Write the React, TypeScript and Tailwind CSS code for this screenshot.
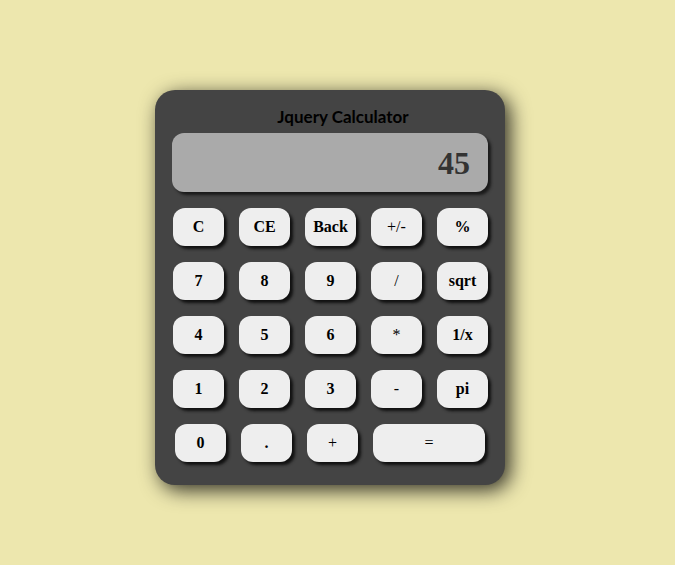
import React from 'react';

type Key = { label: string; bold?: boolean; wide?: boolean };

const rows: Key[][] = [
  [{ label: 'C', bold: true }, { label: 'CE', bold: true }, { label: 'Back', bold: true }, { label: '+/-' }, { label: '%', bold: true }],
  [{ label: '7', bold: true }, { label: '8', bold: true }, { label: '9', bold: true }, { label: '/' }, { label: 'sqrt', bold: true }],
  [{ label: '4', bold: true }, { label: '5', bold: true }, { label: '6', bold: true }, { label: '*' }, { label: '1/x', bold: true }],
  [{ label: '1', bold: true }, { label: '2', bold: true }, { label: '3', bold: true }, { label: '-' }, { label: 'pi', bold: true }],
];

const lastRow: Key[] = [
  { label: '0', bold: true },
  { label: '.', bold: true },
  { label: '+' },
  { label: '=', wide: true },
];

const KeyButton: React.FC<{ k: Key }> = ({ k }) => (
  <button
    className={`h-[38px] ${k.wide ? 'w-[112px]' : 'w-[51px]'} rounded-[12px] bg-[#eeeeee] text-black text-[16px] ${
      k.bold ? 'font-bold' : 'font-normal'
    } shadow-[3px_3px_3px_#111] font-['Liberation_Serif',serif]`}
  >
    {k.label}
  </button>
);

const App: React.FC = () => {
  return (
    <div className="min-h-[565px] w-full bg-[#ede7ae] pt-[90px] pl-[155px]">
      <div className="w-[350px] h-[395px] rounded-[20px] bg-[#444444] shadow-[5px_5px_20px_rgba(0,0,0,0.8)] px-[17px] pt-[16px]">
        <h1 className="pl-[26px] text-center text-[17px] leading-[22px] font-bold text-black font-['Lato',sans-serif]">
          Jquery Calculator
        </h1>
        <div className="mt-[5px] h-[59px] w-[316px] rounded-[12px] bg-[#aaaaaa] shadow-[3px_3px_3px_#1a1a1a] flex items-center justify-end pr-[18px]">
          <span className="text-[32px] font-bold text-[#333333] font-['Liberation_Serif',serif]">45</span>
        </div>
        <div className="mt-[16px] ml-[1px] flex flex-col gap-[16px]">
          {rows.map((row, i) => (
            <div key={i} className="flex gap-[15px]">
              {row.map(k => (
                <KeyButton key={k.label} k={k} />
              ))}
            </div>
          ))}
          <div className="flex gap-[15px] pl-[2px]">
            {lastRow.map(k => (
              <KeyButton key={k.label} k={k} />
            ))}
          </div>
        </div>
      </div>
    </div>
  );
};

export default App;
